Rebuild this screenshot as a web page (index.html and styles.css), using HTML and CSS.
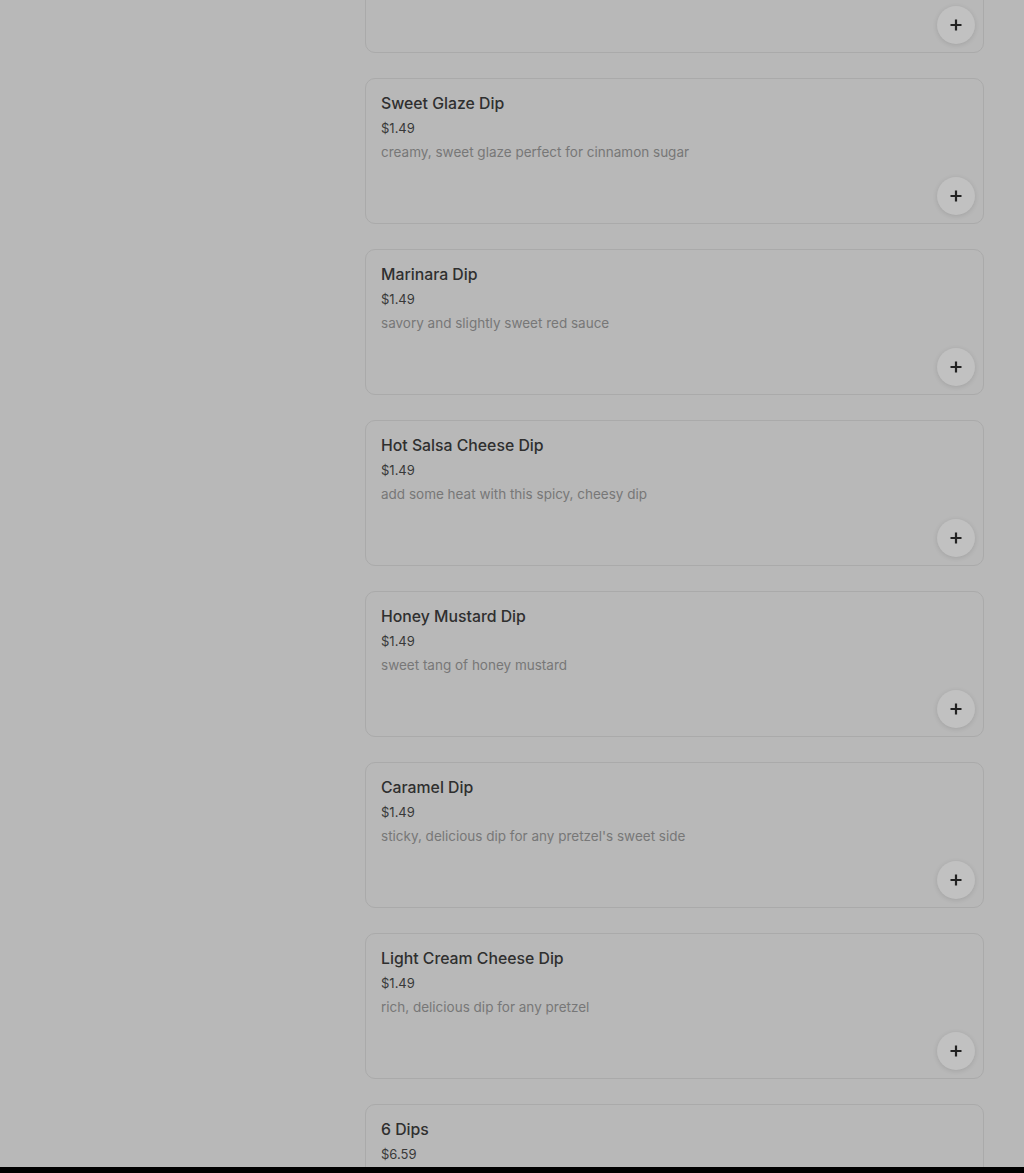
FILE: index.html
```html
<!DOCTYPE html>
<html lang="en">
<head>
    <meta charset="UTF-8">
    <meta name="viewport" content="width=device-width, initial-scale=1.0">
    <title>Dips</title>
    <link rel="stylesheet" href="styles.css">
</head>
<body>

    <div class="page">
        <main class="menu">
            <div class="item">
                <p class="item-name">Cinnamon Sugar Dip</p>
                <p class="item-price">$1.49</p>
                <p class="item-desc">sweet and crunchy</p>
                <button class="add-btn" aria-label="Add">
                    <svg viewBox="0 0 14 14" width="14" height="14"><path d="M7 1.5v11M1.5 7h11" stroke="currentColor" stroke-width="2.2"/></svg>
                </button>
            </div>

            <div class="item">
                <p class="item-name">Sweet Glaze Dip</p>
                <p class="item-price">$1.49</p>
                <p class="item-desc">creamy, sweet glaze perfect for cinnamon sugar</p>
                <button class="add-btn" aria-label="Add">
                    <svg viewBox="0 0 14 14" width="14" height="14"><path d="M7 1.5v11M1.5 7h11" stroke="currentColor" stroke-width="2.2"/></svg>
                </button>
            </div>

            <div class="item">
                <p class="item-name">Marinara Dip</p>
                <p class="item-price">$1.49</p>
                <p class="item-desc">savory and slightly sweet red sauce</p>
                <button class="add-btn" aria-label="Add">
                    <svg viewBox="0 0 14 14" width="14" height="14"><path d="M7 1.5v11M1.5 7h11" stroke="currentColor" stroke-width="2.2"/></svg>
                </button>
            </div>

            <div class="item">
                <p class="item-name">Hot Salsa Cheese Dip</p>
                <p class="item-price">$1.49</p>
                <p class="item-desc">add some heat with this spicy, cheesy dip</p>
                <button class="add-btn" aria-label="Add">
                    <svg viewBox="0 0 14 14" width="14" height="14"><path d="M7 1.5v11M1.5 7h11" stroke="currentColor" stroke-width="2.2"/></svg>
                </button>
            </div>

            <div class="item">
                <p class="item-name">Honey Mustard Dip</p>
                <p class="item-price">$1.49</p>
                <p class="item-desc">sweet tang of honey mustard</p>
                <button class="add-btn" aria-label="Add">
                    <svg viewBox="0 0 14 14" width="14" height="14"><path d="M7 1.5v11M1.5 7h11" stroke="currentColor" stroke-width="2.2"/></svg>
                </button>
            </div>

            <div class="item">
                <p class="item-name">Caramel Dip</p>
                <p class="item-price">$1.49</p>
                <p class="item-desc">sticky, delicious dip for any pretzel's sweet side</p>
                <button class="add-btn" aria-label="Add">
                    <svg viewBox="0 0 14 14" width="14" height="14"><path d="M7 1.5v11M1.5 7h11" stroke="currentColor" stroke-width="2.2"/></svg>
                </button>
            </div>

            <div class="item">
                <p class="item-name">Light Cream Cheese Dip</p>
                <p class="item-price">$1.49</p>
                <p class="item-desc">rich, delicious dip for any pretzel</p>
                <button class="add-btn" aria-label="Add">
                    <svg viewBox="0 0 14 14" width="14" height="14"><path d="M7 1.5v11M1.5 7h11" stroke="currentColor" stroke-width="2.2"/></svg>
                </button>
            </div>

            <div class="item">
                <p class="item-name">6 Dips</p>
                <p class="item-price">$6.59</p>
                <p class="item-desc">one of each dip</p>
                <button class="add-btn" aria-label="Add">
                    <svg viewBox="0 0 14 14" width="14" height="14"><path d="M7 1.5v11M1.5 7h11" stroke="currentColor" stroke-width="2.2"/></svg>
                </button>
            </div>
        </main>
    </div>

    <div class="bottom-bar"></div>

</body>
</html>
```

FILE: styles.css
```css
html, body {
    margin: 0;
    height: 100%;
}

body {
    font-family: Inter, "Noto Sans", Arial, sans-serif;
    background-color: #b8b8b8;
    color: #2e2e2e;
    display: flex;
    flex-direction: column;
    overflow: hidden;
}

.page {
    flex: 1;
    overflow: hidden;
    padding: 0 40px 0 365px;
}

.menu {
    display: flex;
    flex-direction: column;
    gap: 25px;
    margin-top: -93px;
}

.item {
    height: 146px;
    box-sizing: border-box;
    border: 1px solid #aaaaaa;
    border-radius: 10px;
    padding: 13px 8px 8px 15px;
    display: flex;
    flex-direction: column;
}

.item p {
    margin: 0;
}

.item-name {
    font-size: 15.8px;
    font-weight: 500;
    line-height: 24px;
    color: #2f2f2f;
}

.item-price {
    font-size: 13px;
    line-height: 20px;
    margin-top: 2px !important;
    color: #383838;
}

.item-desc {
    font-size: 13.5px;
    line-height: 20px;
    margin-top: 4px !important;
    color: #777777;
}

.add-btn {
    margin-top: auto;
    align-self: flex-end;
    width: 38px;
    height: 38px;
    border: none;
    border-radius: 50%;
    background-color: #c1c1c1;
    box-shadow: 0 1px 5px rgba(0, 0, 0, 0.12);
    color: #222222;
    display: flex;
    align-items: center;
    justify-content: center;
    padding: 0;
    cursor: pointer;
}

.add-btn svg {
    display: block;
}

.bottom-bar {
    height: 6px;
    background-color: #000;
    flex-shrink: 0;
}
```
